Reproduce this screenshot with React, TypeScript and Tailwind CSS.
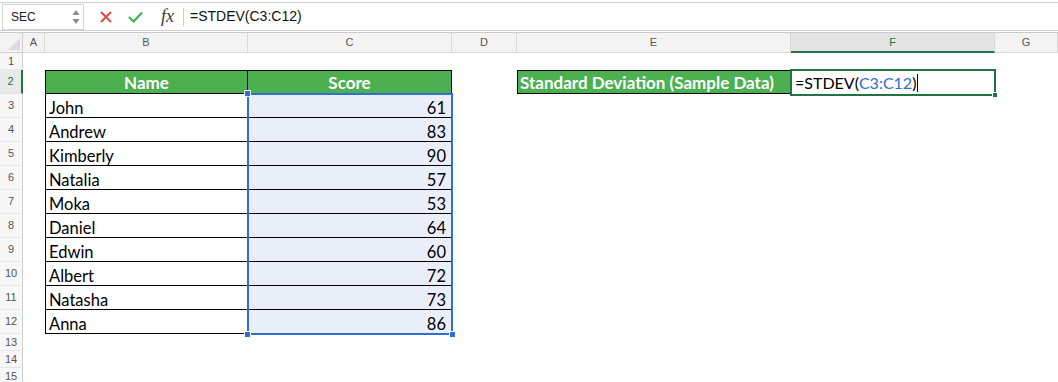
import React from "react";

const names = ["John", "Andrew", "Kimberly", "Natalia", "Moka", "Daniel", "Edwin", "Albert", "Natasha", "Anna"];
const scores = [61, 83, 90, 57, 53, 64, 60, 72, 73, 86];
const letters = ["A", "B", "C", "D", "E", "F", "G"];
const rows = Array.from({ length: 15 }, (_, i) => i + 1);

const cellFont = "font-['Lato','Noto_Sans',sans-serif]";

function Cell({ r, c }: { r: number; c: number }) {
  if (r === 2 && c === 1)
    return (
      <div className={`bg-[#4caf50] border border-black flex items-center justify-center pt-[2px] text-white font-bold text-[17px] ${cellFont}`}>
        Name
      </div>
    );
  if (r === 2 && c === 2)
    return (
      <div className={`bg-[#4caf50] border-y border-r border-black flex items-center justify-center pt-[2px] text-white font-bold text-[17px] ${cellFont}`}>
        Score
      </div>
    );
  if (r >= 3 && r <= 12 && c === 1)
    return (
      <div className={`border-x border-b border-black flex items-center pl-[3px] pt-[6px] text-black text-[16.5px] ${cellFont}`}>
        {names[r - 3]}
      </div>
    );
  if (r >= 3 && r <= 12 && c === 2)
    return (
      <div className={`bg-[#e9eef9] border-r border-b border-black flex items-center justify-end pr-[5px] pt-[6px] text-black text-[16.5px] ${cellFont}`}>
        {scores[r - 3]}
      </div>
    );
  if (r === 2 && c === 4)
    return (
      <div className={`bg-[#4caf50] border border-black flex items-center pl-[2px] pt-[2px] text-white font-bold text-[17px] whitespace-nowrap ${cellFont}`}>
        Standard Deviation (Sample Data)
      </div>
    );
  if (r === 2 && c === 5)
    return (
      <div className={`flex items-center pl-[4px] pt-[2px] text-black text-[16px] whitespace-nowrap ${cellFont}`}>
        <span>=STDEV(</span>
        <span className="text-[#2f6cd6]">C3:C12</span>
        <span>)</span>
        <span className="ml-[1px] w-px h-[18px] bg-black" />
      </div>
    );
  return <div />;
}

export default function App() {
  return (
    <div className="relative w-[1058px] h-[382px] overflow-hidden bg-white font-['Liberation_Sans',Arial,sans-serif]">
      {/* Formula bar */}
      <div className="pt-[2px]">
        <div className="h-[29px] border-t border-b border-[#cfcfcf] flex items-center">
          <div className="ml-[2px] w-[82px] h-[26px] border border-[#d4d4d4] flex items-center justify-between pl-[8px] pr-[3px]">
            <span className="text-[12px] text-[#222]">SEC</span>
            <svg width="8" height="18" viewBox="0 0 8 18">
              <path d="M4 2 L7.5 7 L0.5 7 Z" fill="#8a8a8a" />
              <path d="M4 16 L7.5 11 L0.5 11 Z" fill="#8a8a8a" />
            </svg>
          </div>
          <div className="ml-[16px] w-[12px] h-[12px]">
            <svg width="12" height="12" viewBox="0 0 12 12">
              <path d="M1 1 L11 11 M11 1 L1 11" stroke="#e0474c" strokeWidth="2" />
            </svg>
          </div>
          <div className="ml-[16px] w-[15px] h-[12px]">
            <svg width="15" height="12" viewBox="0 0 15 12">
              <path d="M1 6 L5.5 10.5 L14 1.5" stroke="#3cb25c" strokeWidth="2.2" fill="none" />
            </svg>
          </div>
          <span className="ml-[18px] text-[18px] italic text-[#3a3a3a] font-['Liberation_Serif',serif] leading-none -mt-[2px]">fx</span>
          <div className="ml-[9px] w-px h-[18px] bg-[#d0d0d0]" />
          <span className="ml-[6px] text-[14px] text-[#111]">=STDEV(C3:C12)</span>
        </div>
      </div>

      {/* Sheet grid */}
      <div className="mt-[1px] border-t border-[#c9c9c9] grid grid-cols-[23px_22px_203px_204px_65px_274px_204px_63px] grid-rows-[20px_17px_repeat(11,24px)_repeat(3,17px)]">
        <div className="bg-[#f3f3f3] border-r border-b border-[#cfcfcf] relative">
          <svg className="absolute right-[2px] bottom-[2px]" width="12" height="12" viewBox="0 0 12 12">
            <path d="M12 0 L12 12 L0 12 Z" fill="#dcdcdc" />
          </svg>
        </div>
        {letters.map((l) =>
          l === "F" ? (
            <div key={l} className="bg-[#e4e4e4] border-r border-[#d8d8d8] border-b-2 border-b-[#217346] flex items-center justify-center text-[11px] text-[#217346]">
              {l}
            </div>
          ) : (
            <div key={l} className="bg-[#f3f3f3] border-r border-b border-[#d8d8d8] flex items-center justify-center text-[11px] text-[#555]">
              {l}
            </div>
          )
        )}
        {rows.map((r) => (
          <React.Fragment key={r}>
            {r === 2 ? (
              <div className="bg-[#e9e9e9] border-r-2 border-r-[#217346] border-b border-b-[#e2e2e2] flex items-center justify-center text-[11px] text-[#217346]">
                {r}
              </div>
            ) : (
              <div className="bg-[#f7f7f7] border-r border-r-[#cfcfcf] border-b border-b-[#e6e6e6] flex items-center justify-center text-[11px] text-[#555]">
                {r}
              </div>
            )}
            {letters.map((_, c) => (
              <Cell key={c} r={r} c={c} />
            ))}
          </React.Fragment>
        ))}
      </div>

      {/* Selection range C3:C12 */}
      <div className="absolute left-[247px] top-[93px] w-[206px] h-[242px] border-2 border-[#2f6fd1] pointer-events-none" />
      <div className="absolute left-[244px] top-[90px] w-[7px] h-[7px] bg-[#2f6fd1] border border-white" />
      <div className="absolute left-[244px] top-[331px] w-[7px] h-[7px] bg-[#2f6fd1] border border-white" />
      <div className="absolute left-[449px] top-[331px] w-[7px] h-[7px] bg-[#2f6fd1] border border-white" />

      {/* Active cell F2 */}
      <div className="absolute left-[790px] top-[69px] w-[206px] h-[27px] border-2 border-[#217346] pointer-events-none" />
      <div className="absolute left-[992px] top-[92px] w-[6px] h-[6px] bg-[#217346] border border-white" />
    </div>
  );
}
